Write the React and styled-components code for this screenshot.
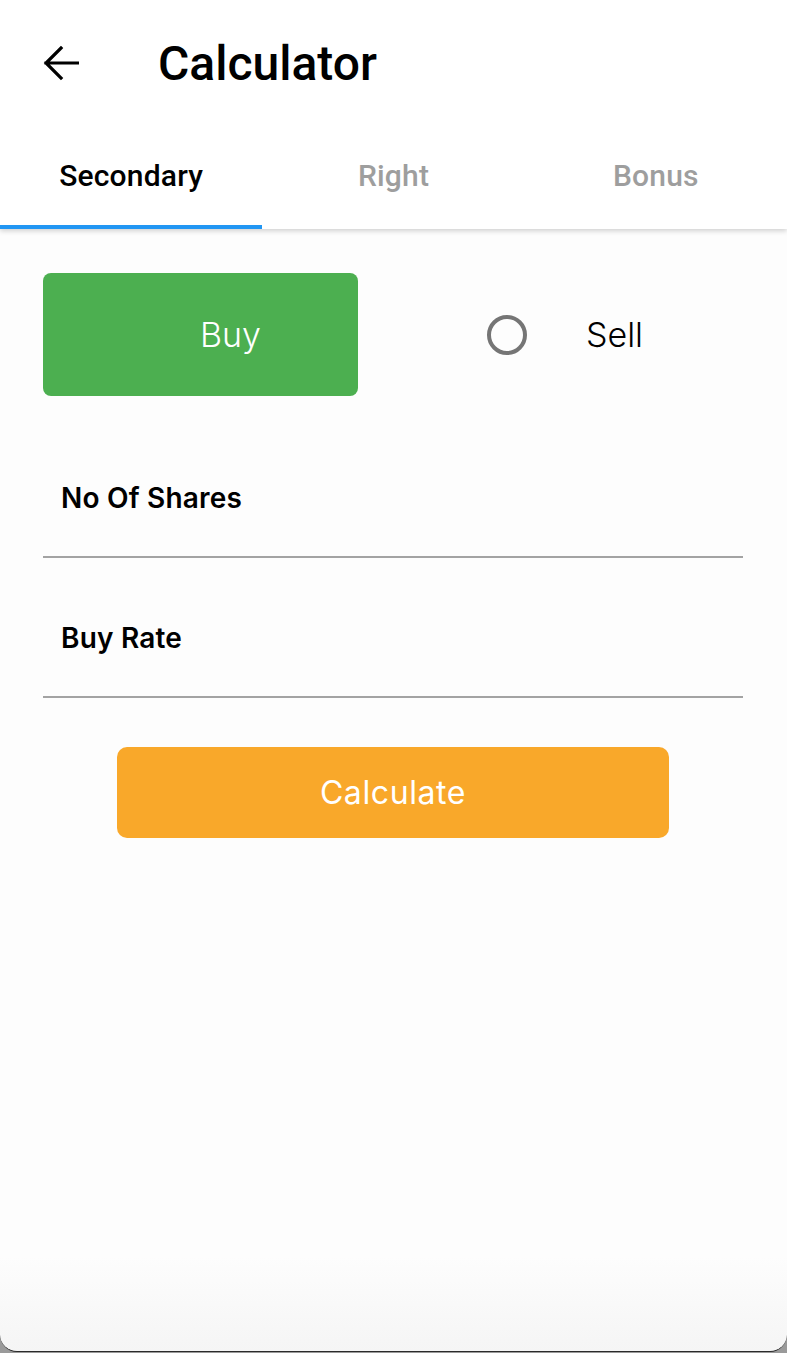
import React, { useState } from 'react';
import styled, { createGlobalStyle } from 'styled-components';

const GlobalStyle = createGlobalStyle`
  html, body {
    margin: 0;
    padding: 0;
    background: #9a9a9a;
  }
  * {
    box-sizing: border-box;
  }
`;

const Screen = styled.div`
  height: 1352px;
  display: flex;
  flex-direction: column;
  background: linear-gradient(180deg, #fdfdfd 93%, #f5f5f5 100%);
  border-bottom: 1.5px solid #2a2a2a;
  border-radius: 0 0 17px 17px;
  overflow: hidden;
`;

const Header = styled.div`
  background: #ffffff;
  box-shadow: 0 2px 5px rgba(0, 0, 0, 0.18);
  position: relative;
  z-index: 1;
`;

const TopBar = styled.div`
  height: 126px;
  display: flex;
  align-items: center;
  padding-left: 43px;
`;

const BackButton = styled.button`
  width: 36px;
  height: 36px;
  padding: 0;
  border: none;
  background: none;
  display: flex;
  align-items: center;
  justify-content: center;
  cursor: pointer;
`;

const Title = styled.h1`
  margin: 0 0 0 79px;
  font-family: Roboto, 'Liberation Sans', sans-serif;
  font-weight: 500;
  font-size: 48px;
  color: #000;
`;

const TabBar = styled.div`
  height: 103px;
  display: grid;
  grid-template-columns: repeat(3, 1fr);
`;

const Tab = styled.div`
  display: flex;
  align-items: center;
  justify-content: center;
  font-family: Roboto, 'Liberation Sans', sans-serif;
  font-weight: 500;
  font-size: 30px;
  letter-spacing: 0.2px;
  color: ${(p) => (p.active ? '#000000' : '#9e9e9e')};
  border-bottom: 4px solid ${(p) => (p.active ? '#2196f3' : 'transparent')};
  cursor: pointer;
`;

const Content = styled.div`
  padding: 44px 44px 0 43px;
  display: flex;
  flex-direction: column;
`;

const ChoiceRow = styled.div`
  display: flex;
  align-items: center;
  margin-bottom: 22px;
`;

const BuyButton = styled.button`
  width: 315px;
  height: 123px;
  border: none;
  border-radius: 8px;
  background: #4caf50;
  color: #fff;
  padding: 0 0 0 60px;
  font-family: Inter, 'Open Sans', sans-serif;
  font-weight: 300;
  font-size: 34px;
  display: flex;
  align-items: center;
  justify-content: center;
`;

const RadioOption = styled.label`
  display: flex;
  align-items: center;
  margin-left: 129px;
  cursor: pointer;
`;

const RadioCircle = styled.span`
  width: 40px;
  height: 40px;
  border-radius: 50%;
  border: 4px solid #757575;
`;

const RadioText = styled.span`
  margin-left: 59px;
  font-family: Inter, 'Open Sans', sans-serif;
  font-weight: 300;
  font-size: 34px;
  color: #000;
`;

const Field = styled.div`
  height: 140px;
  padding: 63px 0 0 18px;
  border-bottom: 2px solid #a3a3a3;
`;

const FieldLabel = styled.div`
  font-family: Inter, 'Open Sans', sans-serif;
  font-weight: 600;
  font-size: 28px;
  line-height: 34px;
  letter-spacing: 0.2px;
  color: #000;
`;

const CalculateButton = styled.button`
  align-self: center;
  margin-top: 49px;
  width: 552px;
  height: 91px;
  border: none;
  border-radius: 10px;
  background: #f9a82a;
  color: #fff;
  font-family: Inter, 'Open Sans', sans-serif;
  font-weight: 400;
  font-size: 32px;
  letter-spacing: 0.6px;
  cursor: pointer;
`;

const tabs = ['Secondary', 'Right', 'Bonus'];

export default function App() {
  const [active, setActive] = useState(0);

  return (
    <Screen>
      <GlobalStyle />
      <Header>
        <TopBar>
          <BackButton aria-label="back">
            <svg width="36" height="36" viewBox="0 0 36 36" fill="none">
              <path
                d="M35 18H3M18 3L3 18l15 15"
                stroke="#000"
                strokeWidth="3.2"
                strokeLinecap="square"
              />
            </svg>
          </BackButton>
          <Title>Calculator</Title>
        </TopBar>
        <TabBar>
          {tabs.map((t, i) => (
            <Tab key={t} active={i === active} onClick={() => setActive(i)}>
              {t}
            </Tab>
          ))}
        </TabBar>
      </Header>
      <Content>
        <ChoiceRow>
          <BuyButton>Buy</BuyButton>
          <RadioOption>
            <RadioCircle />
            <RadioText>Sell</RadioText>
          </RadioOption>
        </ChoiceRow>
        <Field>
          <FieldLabel>No Of Shares</FieldLabel>
        </Field>
        <Field>
          <FieldLabel>Buy Rate</FieldLabel>
        </Field>
        <CalculateButton>Calculate</CalculateButton>
      </Content>
    </Screen>
  );
}
